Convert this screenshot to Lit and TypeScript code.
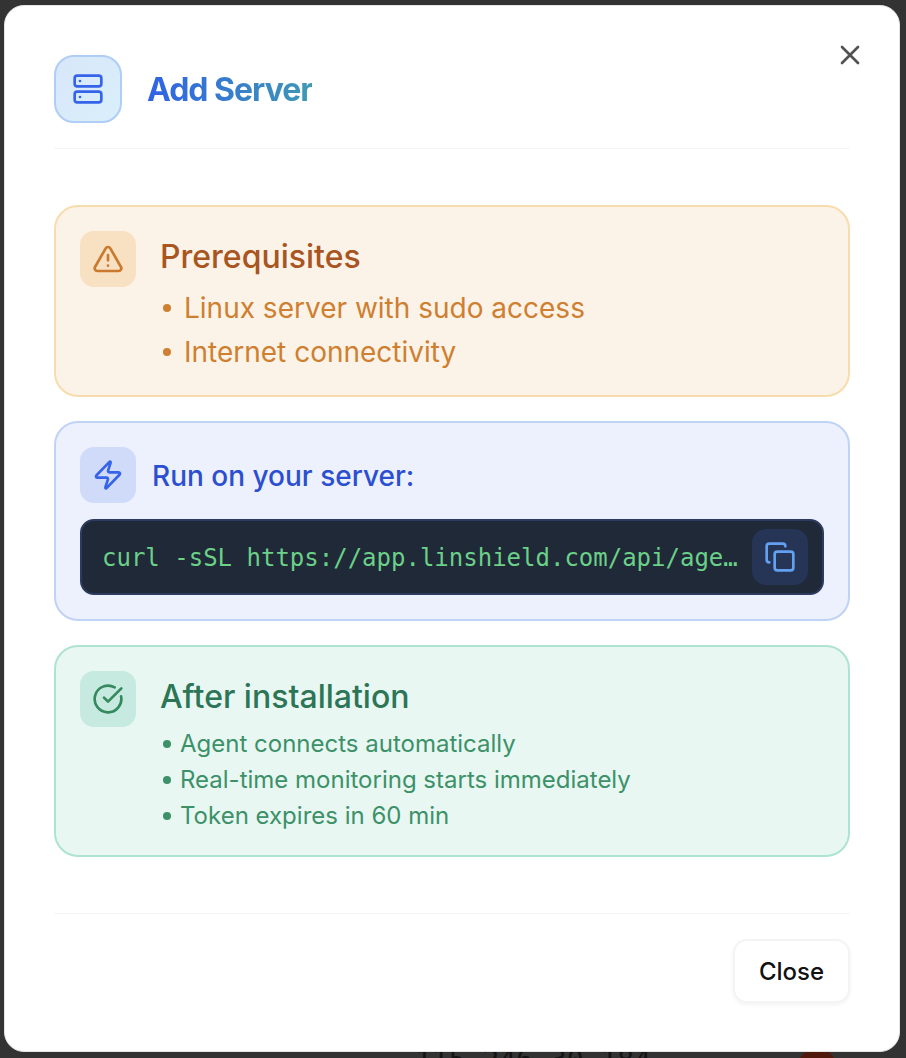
import { LitElement, html, css } from 'lit';
import { customElement } from 'lit/decorators.js';

@customElement('app-root')
export class AppRoot extends LitElement {
  static styles = css`
    :host {
      display: block;
      height: 1058px;
      font-family: Inter, 'Liberation Sans', sans-serif;
    }
    .backdrop {
      box-sizing: border-box;
      height: 1058px;
      padding: 5px 6px 5px 4px;
      background: #333333;
      position: relative;
      overflow: hidden;
    }
    .behind {
      position: absolute;
      top: 1047px;
      left: 415px;
      font-family: 'DejaVu Sans Mono', monospace;
      font-size: 28px;
      line-height: 28px;
      color: #141414;
    }
    .dot-behind {
      position: absolute;
      top: 1048px;
      left: 798px;
      width: 38px;
      height: 38px;
      border-radius: 50%;
      background: #4f1a0c;
    }
    .modal {
      box-sizing: border-box;
      position: relative;
      height: 1047px;
      padding: 49px;
      background: #fff;
      border: 1px solid #e5e5e5;
      border-radius: 20px;
      display: flex;
      flex-direction: column;
    }
    .x {
      position: absolute;
      top: 33px;
      right: 33px;
      width: 32px;
      height: 32px;
      color: #525252;
    }
    .header {
      display: flex;
      align-items: center;
      gap: 25px;
      padding-bottom: 25px;
      border-bottom: 1px solid #f3f4f6;
    }
    .logo {
      box-sizing: border-box;
      width: 68px;
      height: 68px;
      border-radius: 20px;
      border: 2px solid #b0cdf6;
      background: linear-gradient(135deg, #d8e7fa, #d9effa);
      color: #3563e9;
      display: flex;
      align-items: center;
      justify-content: center;
    }
    h1 {
      margin: 0;
      font-size: 32px;
      font-weight: 700;
      letter-spacing: -1px;
      background: linear-gradient(90deg, #2f62e6, #3f98b4);
      -webkit-background-clip: text;
      background-clip: text;
      color: transparent;
    }
    .cards {
      display: flex;
      flex-direction: column;
      gap: 24px;
      margin-top: 56px;
    }
    .card {
      box-sizing: border-box;
      border-radius: 24px;
      border: 2px solid;
      padding: 24px;
    }
    .row {
      display: flex;
      gap: 24px;
    }
    .badge {
      flex: none;
      width: 56px;
      height: 56px;
      border-radius: 14px;
      display: flex;
      align-items: center;
      justify-content: center;
    }
    .amber {
      height: 192px;
      background: #fcf3e8;
      border-color: #f8dcae;
    }
    .amber .badge {
      background: #f8e0c2;
      color: #ca7a2e;
    }
    .amber h2 {
      color: #a8551f;
    }
    .amber ul {
      color: #cf7f30;
      font-size: 28px;
      line-height: 44px;
      margin-top: 4px;
    }
    .amber li {
      gap: 13px;
    }
    .blue {
      height: 200px;
      background: #edf1fd;
      border-color: #bfd3f6;
    }
    .blue .badge {
      background: #d0daf9;
      color: #3563e9;
    }
    .blue .row {
      align-items: center;
      gap: 16px;
    }
    .run {
      padding-top: 2px;
      font-size: 28px;
      font-weight: 500;
      color: #2b4fd0;
    }
    .code {
      box-sizing: border-box;
      margin-top: 16px;
      height: 76px;
      border-radius: 14px;
      border: 2px solid #2d3b5e;
      background: #1f2937;
      display: flex;
      align-items: center;
      padding: 0 14px 0 20px;
      gap: 12px;
    }
    .code span {
      flex: 1;
      min-width: 0;
      overflow: hidden;
      white-space: nowrap;
      text-overflow: ellipsis;
      padding-top: 2px;
      font-family: 'DejaVu Sans Mono', monospace;
      font-size: 24px;
      color: #6bd088;
    }
    .copy {
      flex: none;
      width: 56px;
      height: 56px;
      border-radius: 14px;
      background: #263556;
      color: #64a0f2;
      display: flex;
      align-items: center;
      justify-content: center;
    }
    .green {
      height: 212px;
      background: #e8f7f2;
      border-color: #aee3d0;
    }
    .green .badge {
      background: #c6eadf;
      color: #34895f;
    }
    .green h2 {
      color: #2c7556;
    }
    .green ul {
      color: #3c9169;
      font-size: 24px;
      line-height: 36px;
      margin-top: 4px;
    }
    .green li {
      gap: 9px;
    }
    h2 {
      margin: 0;
      padding-top: 1px;
      font-size: 32px;
      font-weight: 500;
      line-height: 50px;
    }
    ul {
      list-style: none;
      margin: 0;
      padding: 0;
    }
    li {
      display: flex;
      align-items: center;
      gap: 12px;
      padding-left: 3px;
    }
    li::before {
      content: '';
      width: 8px;
      height: 8px;
      border-radius: 50%;
      background: currentColor;
    }
    .footer {
      margin-top: 56px;
      padding-top: 25px;
      border-top: 1px solid #f3f4f6;
      display: flex;
      justify-content: flex-end;
    }
    .close {
      box-sizing: border-box;
      width: 117px;
      height: 64px;
      padding-top: 2px;
      border-radius: 14px;
      border: 2px solid #f3f4f6;
      background: #fff;
      box-shadow: 0 2px 4px rgba(0, 0, 0, 0.05);
      font-family: inherit;
      font-size: 24px;
      font-weight: 500;
      color: #111;
    }
  `;

  render() {
    return html`
      <div class="backdrop">
        <div class="behind">115.246.30.184</div>
        <div class="dot-behind"></div>
        <div class="modal">
          <svg class="x" viewBox="0 0 24 24" fill="none" stroke="currentColor" stroke-width="2" stroke-linecap="round">
            <path d="M6 6l12 12M18 6L6 18" />
          </svg>
          <div class="header">
            <div class="logo">
              <svg width="32" height="32" viewBox="0 0 24 24" fill="none" stroke="currentColor" stroke-width="2" stroke-linecap="round" stroke-linejoin="round">
                <rect x="2" y="2" width="20" height="8" rx="2" />
                <rect x="2" y="14" width="20" height="8" rx="2" />
                <path d="M6 6h.01M6 18h.01" />
              </svg>
            </div>
            <h1>Add Server</h1>
          </div>
          <div class="cards">
            <div class="card amber">
              <div class="row">
                <div class="badge">
                  <svg width="32" height="32" viewBox="0 0 24 24" fill="none" stroke="currentColor" stroke-width="2" stroke-linecap="round" stroke-linejoin="round">
                    <path d="M21.73 18l-8-14a2 2 0 0 0-3.46 0l-8 14A2 2 0 0 0 4 21h16a2 2 0 0 0 1.73-3Z" />
                    <path d="M12 9v4M12 17h.01" />
                  </svg>
                </div>
                <div>
                  <h2>Prerequisites</h2>
                  <ul>
                    <li>Linux server with sudo access</li>
                    <li>Internet connectivity</li>
                  </ul>
                </div>
              </div>
            </div>
            <div class="card blue">
              <div class="row">
                <div class="badge">
                  <svg width="32" height="32" viewBox="0 0 24 24" fill="none" stroke="currentColor" stroke-width="2" stroke-linecap="round" stroke-linejoin="round">
                    <path d="M4 14a1 1 0 0 1-.78-1.63l9.9-10.2a.5.5 0 0 1 .86.46l-1.92 6.02A1 1 0 0 0 13 10h7a1 1 0 0 1 .78 1.63l-9.9 10.2a.5.5 0 0 1-.86-.46l1.92-6.02A1 1 0 0 0 11 14z" />
                  </svg>
                </div>
                <div class="run">Run on your server:</div>
              </div>
              <div class="code">
                <span>curl -sSL https://app.linshield.com/api/agent/install.sh | sudo bash</span>
                <div class="copy">
                  <svg width="32" height="32" viewBox="0 0 24 24" fill="none" stroke="currentColor" stroke-width="2" stroke-linecap="round" stroke-linejoin="round">
                    <rect x="8" y="8" width="14" height="14" rx="2" />
                    <path d="M4 16c-1.1 0-2-.9-2-2V4c0-1.1.9-2 2-2h10c1.1 0 2 .9 2 2" />
                  </svg>
                </div>
              </div>
            </div>
            <div class="card green">
              <div class="row">
                <div class="badge">
                  <svg width="32" height="32" viewBox="0 0 24 24" fill="none" stroke="currentColor" stroke-width="2" stroke-linecap="round" stroke-linejoin="round">
                    <path d="M21.8 10A10 10 0 1 1 17 3.34" />
                    <path d="m9 11 3 3L22 4" />
                  </svg>
                </div>
                <div>
                  <h2>After installation</h2>
                  <ul>
                    <li>Agent connects automatically</li>
                    <li>Real-time monitoring starts immediately</li>
                    <li>Token expires in 60 min</li>
                  </ul>
                </div>
              </div>
            </div>
          </div>
          <div class="footer">
            <button class="close">Close</button>
          </div>
        </div>
      </div>
    `;
  }
}
